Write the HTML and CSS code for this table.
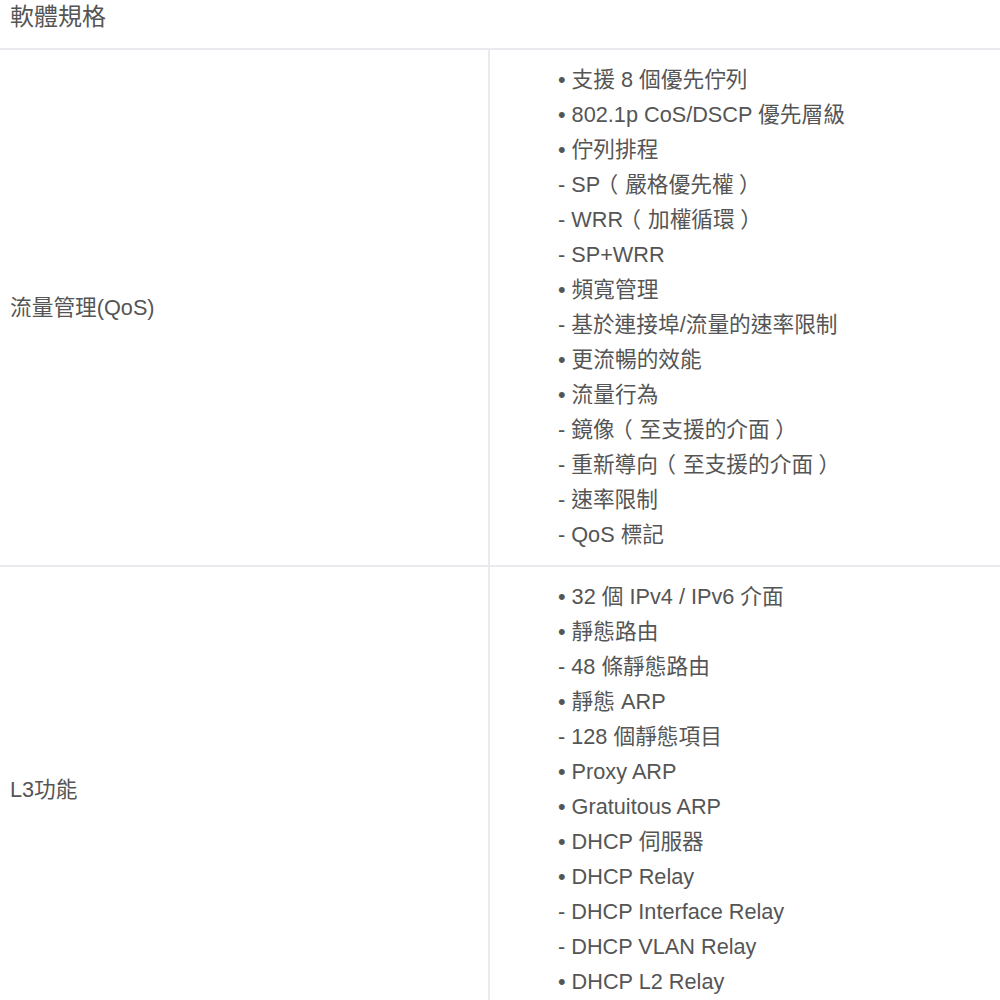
FILE: index.html
```html
<!DOCTYPE html>
<html lang="zh-Hant">
<head>
  <meta charset="UTF-8" />
  <title>軟體規格</title>
  <link rel="stylesheet" href="styles.css">
</head>
<body>
  <h2 class="spec-title">軟體規格</h2>
  <table class="spec-table">
    <tr>
      <td class="spec-name">流量管理(QoS)</td>
      <td class="spec-value">
        <div>• 支援 8 個優先佇列</div>
        <div>• 802.1p CoS/DSCP 優先層級</div>
        <div>• 佇列排程</div>
        <div>- SP<span class="po">（</span>嚴格優先權<span class="pc">）</span></div>
        <div>- WRR<span class="po">（</span>加權循環<span class="pc">）</span></div>
        <div>- SP+WRR</div>
        <div>• 頻寬管理</div>
        <div>- 基於連接埠/流量的速率限制</div>
        <div>• 更流暢的效能</div>
        <div>• 流量行為</div>
        <div>- 鏡像<span class="po">（</span>至支援的介面<span class="pc">）</span></div>
        <div>- 重新導向<span class="po">（</span>至支援的介面<span class="pc">）</span></div>
        <div>- 速率限制</div>
        <div>- QoS 標記</div>
      </td>
    </tr>
    <tr>
      <td class="spec-name">L3功能</td>
      <td class="spec-value">
        <div>• 32 個 IPv4 / IPv6 介面</div>
        <div>• 靜態路由</div>
        <div>- 48 條靜態路由</div>
        <div>• 靜態 ARP</div>
        <div>- 128 個靜態項目</div>
        <div>• Proxy ARP</div>
        <div>• Gratuitous ARP</div>
        <div>• DHCP 伺服器</div>
        <div>• DHCP Relay</div>
        <div>- DHCP Interface Relay</div>
        <div>- DHCP VLAN Relay</div>
        <div>• DHCP L2 Relay</div>
      </td>
    </tr>
  </table>
</body>
</html>
```

FILE: styles.css
```css
body {
  margin: 0;
  background: #fff;
  color: #555;
  font-family: "Liberation Sans", Arial, "Noto Sans CJK TC", sans-serif;
}

.spec-title {
  margin: 0;
  height: 48px;
  padding: 0 10px;
  font-size: 24px;
  font-weight: normal;
  line-height: 34px;
  border-bottom: 2px solid #ebebef;
}

.spec-table {
  border-collapse: collapse;
  width: 100%;
}

.spec-table td {
  padding: 12px 0 13px;
  border-bottom: 2px solid #ebebef;
  font-size: 21.7px;
  line-height: 35px;
}

.spec-name {
  width: 478px;
  padding-left: 10px !important;
  border-right: 2px solid #ebebef;
  vertical-align: middle;
}

.spec-value {
  padding-left: 68px !important;
}

/* full-width brackets, half-width glyph with room on both sides */
.po,
.pc {
  font-feature-settings: "halt";
}

.po {
  margin: 0 0.32em 0 0.33em;
}

.pc {
  margin-left: 0.25em;
}
```
